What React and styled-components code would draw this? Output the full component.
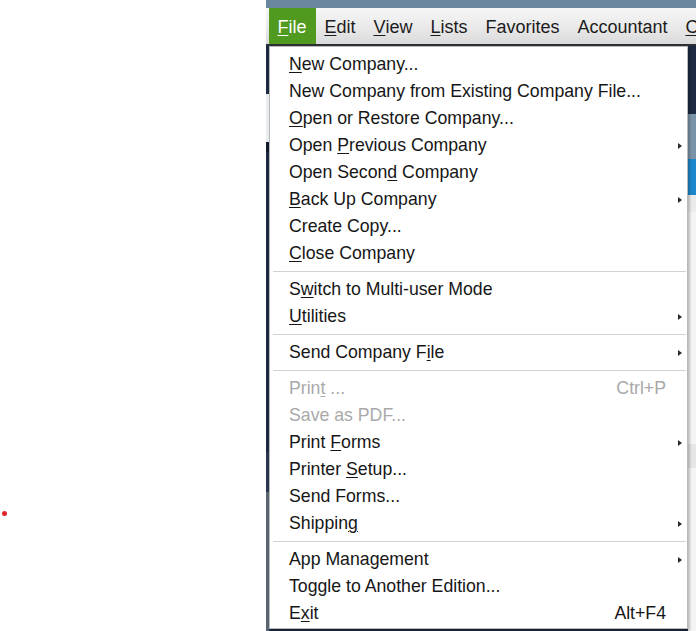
import React from "react";
import styled, { createGlobalStyle } from "styled-components";

const GlobalStyle = createGlobalStyle`
  html, body {
    margin: 0;
    padding: 0;
    background: #ffffff;
    overflow: hidden;
  }
  body {
    font-family: "Liberation Sans", Arial, sans-serif;
  }
`;

const Page = styled.div`
  width: 696px;
  height: 631px;
  display: flex;
  overflow: hidden;
`;

const Blank = styled.div`
  width: 266px;
  flex: none;
  position: relative;
  background: #ffffff;
`;

const RedDot = styled.span`
  position: absolute;
  left: 2px;
  top: 511px;
  width: 5px;
  height: 5px;
  border-radius: 50%;
  background: #e0262b;
`;

const Window = styled.div`
  flex: 1;
  display: flex;
  flex-direction: column;
  position: relative;
  min-width: 0;
`;

const TitleStrip = styled.div`
  height: 8px;
  background: #6b879f;
`;

const MenuBar = styled.div`
  height: 36px;
  display: flex;
  align-items: stretch;
  padding-left: 3px;
  background: linear-gradient(#f6f6f6, #e9e9e9 55%, #dadada);
  border-bottom: 2px solid #2b2f36;
  white-space: nowrap;
  overflow: hidden;
`;

const BarItem = styled.div`
  display: flex;
  align-items: center;
  padding: 3px 9.6px 0 8.4px;
  font-size: 18px;
  color: ${(p) => (p.$active ? "#ffffff" : "#1c1c1c")};
  background: ${(p) => (p.$active ? "#4f9a1f" : "transparent")};
`;

const Body = styled.div`
  flex: 1;
  display: flex;
  justify-content: space-between;
  background: #1b2a41;
`;

const LeftEdge = styled.div`
  width: 3px;
  display: flex;
  flex-direction: column;
`;

const RightEdge = styled.div`
  width: 8px;
  display: flex;
  flex-direction: column;
`;

const Patch = styled.div`
  height: ${(p) => p.$h}px;
  flex: ${(p) => (p.$grow ? 1 : "none")};
  background: ${(p) => p.$bg};
`;

const Dropdown = styled.div`
  position: absolute;
  left: 3px;
  top: 46px;
  width: 417px;
  padding: 4px 0 1px;
  background: #ffffff;
  border: 1px solid #b9b9b9;
  box-shadow: 2px 2px 2px rgba(0, 0, 0, 0.22);
  font-size: 17.7px;
`;

const Item = styled.div`
  height: 27px;
  display: flex;
  align-items: center;
  padding-left: 19px;
  color: ${(p) => (p.$disabled ? "#a9a9a9" : "#161616")};
  white-space: nowrap;
`;

const Label = styled.span`
  flex: 1;
`;

const Key = styled.u`
  text-decoration-thickness: 1px;
  text-underline-offset: 2px;
`;

const Shortcut = styled.span`
  color: inherit;
`;

const ArrowCell = styled.span`
  width: 21px;
  flex: none;
  display: flex;
  align-items: center;
  padding-left: 12px;
  box-sizing: border-box;
`;

const Arrow = styled.span`
  width: 0;
  height: 0;
  border-top: 3.5px solid transparent;
  border-bottom: 3.5px solid transparent;
  border-left: 4px solid #2a2a2a;
`;

const Separator = styled.div`
  height: 9px;
  display: flex;
  align-items: center;
  padding: 0 1px 0 3px;
  &::after {
    content: "";
    flex: 1;
    height: 1px;
    background: #d3d3d3;
  }
`;

const Mnemonic = ({ text, u }) => {
  if (u == null) return text;
  return (
    <>
      {text.slice(0, u)}
      <Key>{text[u]}</Key>
      {text.slice(u + 1)}
    </>
  );
};

const barItems = [
  { text: "File", u: 0, active: true },
  { text: "Edit", u: 0 },
  { text: "View", u: 0 },
  { text: "Lists", u: 0 },
  { text: "Favorites" },
  { text: "Accountant" },
  { text: "Company", u: 0 },
];

const menu = [
  { text: "New Company...", u: 0 },
  { text: "New Company from Existing Company File..." },
  { text: "Open or Restore Company...", u: 0 },
  { text: "Open Previous Company", u: 5, sub: true },
  { text: "Open Second Company", u: 10 },
  { text: "Back Up Company", u: 0, sub: true },
  { text: "Create Copy..." },
  { text: "Close Company", u: 0 },
  "sep",
  { text: "Switch to Multi-user Mode", u: 1 },
  { text: "Utilities", u: 0, sub: true },
  "sep",
  { text: "Send Company File", u: 14, sub: true },
  "sep",
  { text: "Print ...", u: 4, disabled: true, key: "Ctrl+P" },
  { text: "Save as PDF...", disabled: true },
  { text: "Print Forms", u: 6, sub: true },
  { text: "Printer Setup...", u: 8 },
  { text: "Send Forms..." },
  { text: "Shipping", u: 7, sub: true },
  "sep",
  { text: "App Management", sub: true },
  { text: "Toggle to Another Edition..." },
  { text: "Exit", u: 1, key: "Alt+F4" },
];

export default function App() {
  return (
    <>
      <GlobalStyle />
      <Page>
        <Blank>
          <RedDot />
        </Blank>
        <Window>
          <TitleStrip />
          <MenuBar>
            {barItems.map((b) => (
              <BarItem key={b.text} $active={b.active}>
                <Mnemonic text={b.text} u={b.u} />
              </BarItem>
            ))}
          </MenuBar>
          <Body>
            <LeftEdge>
              <Patch $h={48} $bg="#1b2a41" />
              <Patch $h={48} $bg="#e9ecef" />
              <Patch $h={10} $bg="#0f1a2a" />
              <Patch $h={300} $bg="#1b2a41" />
              <Patch $h={40} $bg="#27364c" />
              <Patch $grow $bg="#5a6470" />
            </LeftEdge>
            <RightEdge>
              <Patch $h={68} $bg="#1b2a41" />
              <Patch $h={45} $bg="#7b93a8" />
              <Patch $h={36} $bg="#1f88cc" />
              <Patch $h={17} $bg="#ebebeb" />
              <Patch $h={232} $bg="#f4f4f4" />
              <Patch $h={24} $bg="#e6e6e6" />
              <Patch $grow $bg="#f4f4f4" />
            </RightEdge>
          </Body>
          <Dropdown>
            {menu.map((m, i) =>
              m === "sep" ? (
                <Separator key={i} />
              ) : (
                <Item key={i} $disabled={m.disabled}>
                  <Label>
                    <Mnemonic text={m.text} u={m.u} />
                  </Label>
                  {m.key && <Shortcut>{m.key}</Shortcut>}
                  <ArrowCell>{m.sub && <Arrow />}</ArrowCell>
                </Item>
              )
            )}
          </Dropdown>
        </Window>
      </Page>
    </>
  );
}
